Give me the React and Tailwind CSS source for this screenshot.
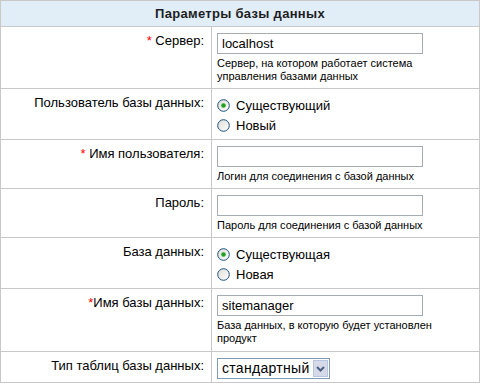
import React from 'react';

function Radio({ checked }) {
    return (
        <svg width="13" height="13" viewBox="0 0 13 13" className="shrink-0">
            <defs>
                <linearGradient id="rg" x1="0" y1="0" x2="1" y2="1">
                    <stop offset="0" stopColor="#dcdcd6" />
                    <stop offset="1" stopColor="#ffffff" />
                </linearGradient>
            </defs>
            <circle cx="6.5" cy="6.5" r="5.8" fill="url(#rg)" stroke="#1c5180" strokeWidth="1" />
            {checked && <circle cx="6.5" cy="6.5" r="2.3" fill="#21a121" />}
        </svg>
    );
}

function Label({ children, star, tight }) {
    return (
        <td className="w-[211px] border-r border-[#c8c8c8] pr-[7px] pt-[6px] align-top text-right">
            {star && <span className="text-[#ff0000]">*{tight ? '' : ' '}</span>}
            {children}
        </td>
    );
}

function TextInput({ value }) {
    return (
        <div className="h-[21px] w-[206px] border border-[#a5acb2] bg-white pl-[4px] leading-[19px]">{value}</div>
    );
}

function Help({ children }) {
    return <div className="mt-[3px] text-[11px] leading-[13px]">{children}</div>;
}

function RadioPair({ first, second }) {
    return (
        <div className="pl-[5px] pt-[3px]">
            <div className="flex h-[20px] items-center gap-[6px]">
                <Radio checked />
                <span>{first}</span>
            </div>
            <div className="flex h-[20px] items-center gap-[6px]">
                <Radio />
                <span>{second}</span>
            </div>
        </div>
    );
}

export default function App() {
    const row = 'border-b border-[#c8c8c8]';
    const cell = 'pl-[5px] pt-[6px] align-top';
    return (
        <div className="w-[480px] bg-white text-[13px] leading-[15px] text-black" style={{ fontFamily: '"Liberation Sans", Arial, sans-serif' }}>
            <table className="w-[480px] border-collapse border border-[#c8c8c8]">
                <tbody>
                    <tr className={row}>
                        <td colSpan={2} className="h-[26px] bg-[#e1eef8] text-center font-bold tracking-[0.3px] text-[#1e1e1e]">
                            Параметры базы данных
                        </td>
                    </tr>
                    <tr className={row}>
                        <Label star>Сервер:</Label>
                        <td className={`${cell} h-[62px]`}>
                            <TextInput value="localhost" />
                            <Help>Сервер, на котором работает система<br />управления базами данных</Help>
                        </td>
                    </tr>
                    <tr className={row}>
                        <Label>Пользователь базы данных:</Label>
                        <td className="h-[51px] pt-[3px] align-top">
                            <RadioPair first="Существующий" second="Новый" />
                        </td>
                    </tr>
                    <tr className={row}>
                        <Label star>Имя пользователя:</Label>
                        <td className={`${cell} h-[49px]`}>
                            <TextInput value="" />
                            <Help>Логин для соединения с базой данных</Help>
                        </td>
                    </tr>
                    <tr className={row}>
                        <Label>Пароль:</Label>
                        <td className={`${cell} h-[49px]`}>
                            <TextInput value="" />
                            <Help>Пароль для соединения с базой данных</Help>
                        </td>
                    </tr>
                    <tr className={row}>
                        <Label>База данных:</Label>
                        <td className="h-[51px] pt-[3px] align-top">
                            <RadioPair first="Существующая" second="Новая" />
                        </td>
                    </tr>
                    <tr className={row}>
                        <Label star tight>Имя базы данных:</Label>
                        <td className={`${cell} h-[63px]`}>
                            <TextInput value="sitemanager" />
                            <Help>База данных, в которую будет установлен<br />продукт</Help>
                        </td>
                    </tr>
                    <tr>
                        <Label>Тип таблиц базы данных:</Label>
                        <td className={`${cell} h-[31px]`}>
                            <div className="flex h-[21px] w-[113px] items-stretch border border-[#7f9db9] bg-white">
                                <span className="flex-1 pl-[4px] text-[14px] leading-[19px] tracking-[0.3px]">стандартный</span>
                                <span className="m-[1px] flex w-[15px] items-center justify-center border border-[#b8c5e0] bg-[#d6d9e8]">
                                    <svg width="9" height="6" viewBox="0 0 9 6">
                                        <path d="M1 1 L4.5 4.5 L8 1" fill="none" stroke="#4d6185" strokeWidth="2" />
                                    </svg>
                                </span>
                            </div>
                        </td>
                    </tr>
                </tbody>
            </table>
        </div>
    );
}
